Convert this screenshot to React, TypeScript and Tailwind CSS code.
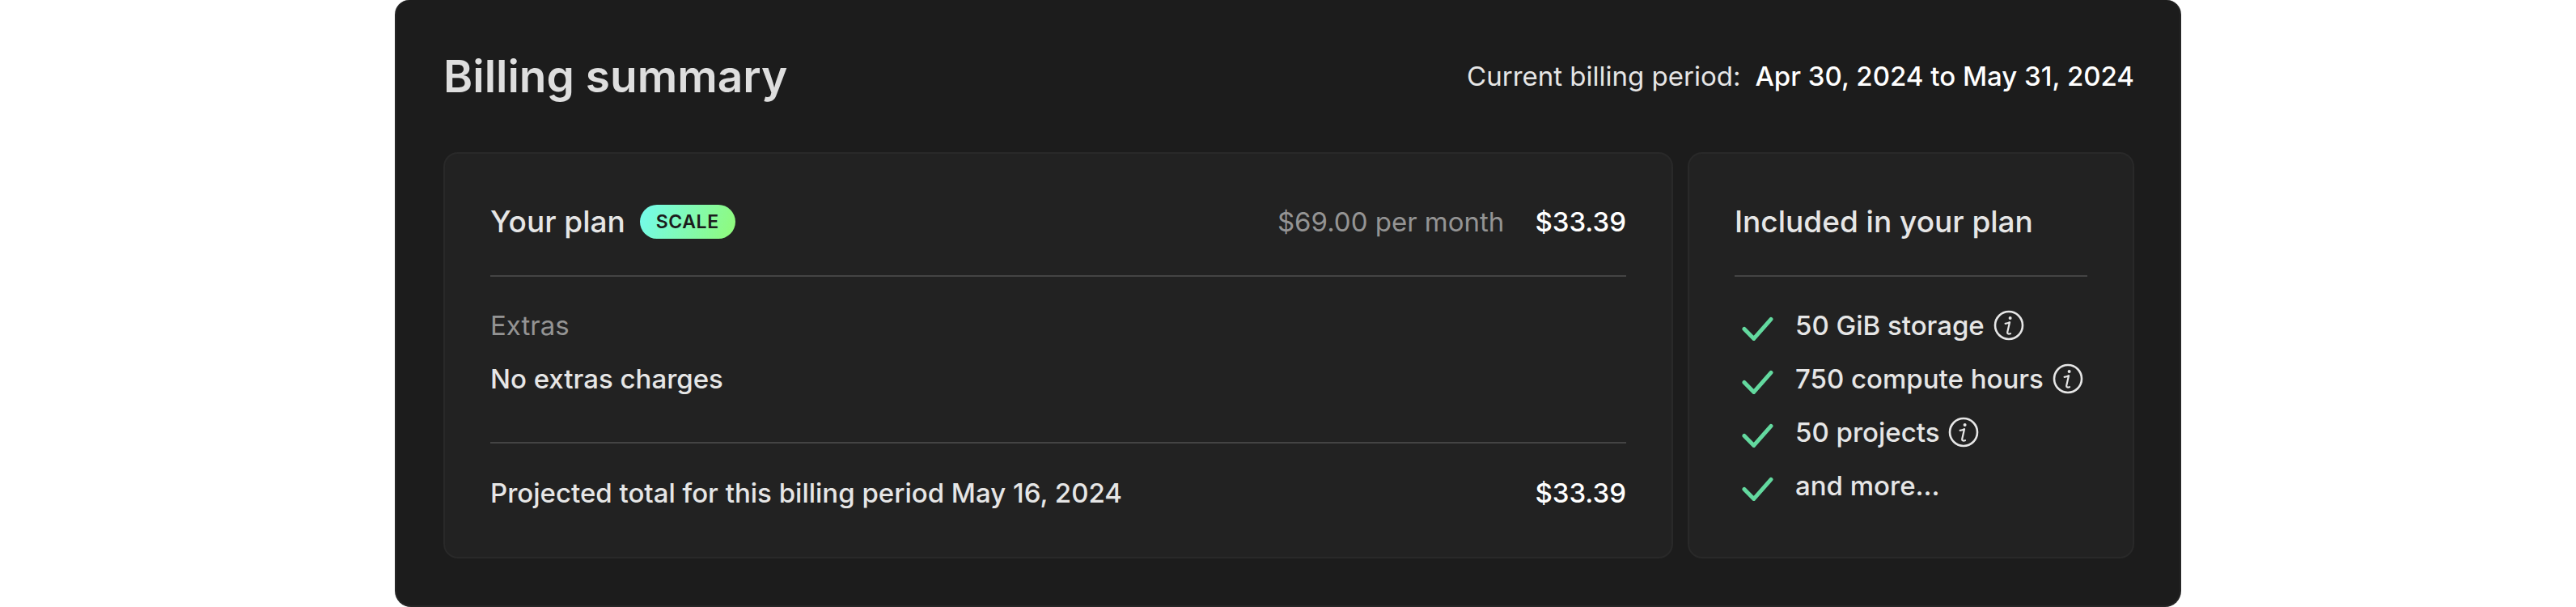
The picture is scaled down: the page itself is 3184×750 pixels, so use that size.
import type { ReactNode } from "react";

const features = [
  { label: "50 GiB storage", info: true },
  { label: "750 compute hours", info: true },
  { label: "50 projects", info: true },
  { label: "and more...", info: false },
];

function CheckIcon() {
  return (
    <svg viewBox="0 0 48 48" className="size-12 shrink-0" fill="none" stroke="#63d99f" strokeWidth="5" strokeLinecap="round" strokeLinejoin="round" aria-hidden="true">
      <path d="M12 28.4 23.8 40.4 45 16.4" />
    </svg>
  );
}

function InfoIcon() {
  return (
    <svg viewBox="0 0 38 38" className="block size-[38px]" fill="none" stroke="#e6e6e6" aria-hidden="true">
      <circle cx="19" cy="19" r="17" strokeWidth="2.6" />
      <circle cx="20.6" cy="10" r="2" fill="#e6e6e6" stroke="none" />
      <path d="M14.6 16.8C16.8 16.8 18.4 16.4 20 15.2L17.2 27.4C16.9 29.4 18.2 30 21 29.2" strokeWidth="2.2" strokeLinecap="round" strokeLinejoin="round" />
    </svg>
  );
}

function Card({ label, children }: { label: string; children: ReactNode }) {
  return (
    <section aria-label={label} className="flex min-w-0 flex-col rounded-[18px] border-2 border-[#292929] bg-[#222222] px-14 pt-[54px] pb-[58px]">
      {children}
    </section>
  );
}

export default function App() {
  return (
    <main className="mx-auto max-w-[2208px] rounded-t-[18px] rounded-b-[20px] border-2 border-t-0 border-[#262626] bg-[#1c1c1c] pt-[60px] pr-14 pb-[58px] pl-[58px] font-['Inter',sans-serif] text-[33px] leading-[42px] text-[#e6e6e6]">
      <header className="mb-[60px] flex items-center justify-between">
        <h1 className="text-[55px] leading-[68px] font-semibold text-[#dedede]">Billing summary</h1>
        <p className="flex gap-[18px]">
          <span>Current billing period:</span>
          <span className="font-medium text-white">Apr 30, 2024 to May 31, 2024</span>
        </p>
      </header>

      <div className="grid grid-cols-[minmax(0,1fr)_552px] gap-[18px]">
        <Card label="Your plan">
          <div className="flex h-[60px] items-center justify-between">
            <div className="flex items-center gap-[18px]">
              <h2 className="text-[37px] leading-[56px] font-medium">Your plan</h2>
              <span className="rounded-full bg-linear-[110deg] from-[#73fbee] to-[#90fa78] px-5 text-[23px] leading-[42px] font-semibold tracking-wide text-[#1c1c1c]">SCALE</span>
            </div>
            <div className="flex items-center gap-[38px]">
              <span className="text-[#949494]">$69.00 per month</span>
              <span className="font-medium text-white">$33.39</span>
            </div>
          </div>
          <hr className="mt-9 border-t-2 border-[#444444]" />
          <h3 className="mt-[39px] text-[#949494]">Extras</h3>
          <p className="mt-6 font-medium">No extras charges</p>
          <hr className="mt-[57px] border-t-2 border-[#444444]" />
          <div className="mt-10 flex items-center justify-between font-medium">
            <span>Projected total for this billing period May 16, 2024</span>
            <span className="text-white">$33.39</span>
          </div>
        </Card>

        <Card label="Included in your plan">
          <h2 className="flex h-[60px] items-center text-[37px] leading-[56px] font-medium">Included in your plan</h2>
          <hr className="mt-9 border-t-2 border-[#444444]" />
          <ul className="mt-[39px] flex flex-col gap-6">
            {features.map((feature) => (
              <li key={feature.label} className="flex h-[42px] items-center whitespace-nowrap">
                <CheckIcon />
                <span className="ml-[27px] font-medium">{feature.label}</span>
                {feature.info && (
                  <button type="button" aria-label={`About ${feature.label}`} className="ml-[11px]">
                    <InfoIcon />
                  </button>
                )}
              </li>
            ))}
          </ul>
        </Card>
      </div>
    </main>
  );
}
